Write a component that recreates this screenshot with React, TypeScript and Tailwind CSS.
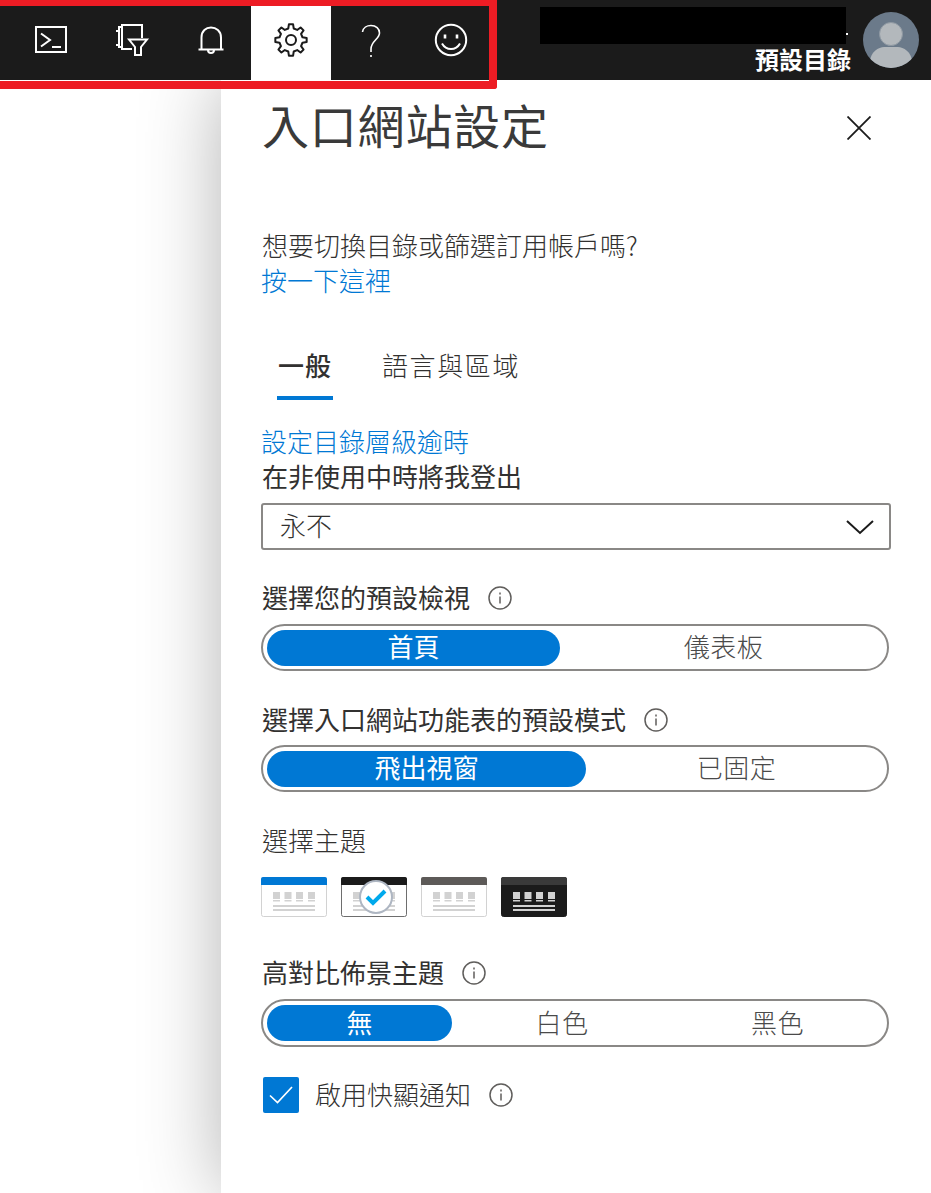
const cjk = { fontFamily: '"Noto Sans CJK TC", "Liberation Sans", sans-serif' }

function gearPath(cx: number, cy: number) {
  // 8 tooth cog
  const teeth = 8
  const pts: string[] = []
  for (let i = 0; i < teeth; i++) {
    const a = (i / teeth) * Math.PI * 2 - Math.PI / 2
    const step = (Math.PI * 2) / teeth
    const list: [number, number][] = [
      [11.8, a - step * 0.3],
      [15.8, a - step * 0.17],
      [15.8, a + step * 0.17],
      [11.8, a + step * 0.3],
    ]
    list.forEach(([r, t]) => {
      pts.push(`${(cx + r * Math.cos(t)).toFixed(2)} ${(cy + r * Math.sin(t)).toFixed(2)}`)
    })
  }
  return 'M' + pts.join('L') + 'Z'
}

function NavButton({ active, width = 2, children }: { active?: boolean; width?: number; children: React.ReactNode }) {
  return (
    <div className={`w-[80px] h-[80px] flex items-center justify-center ${active ? 'bg-white' : ''}`}>
      <svg width="40" height="40" viewBox="0 0 40 40" fill="none" stroke={active ? '#1b1b1b' : '#fff'} strokeWidth={width}>
        {children}
      </svg>
    </div>
  )
}

function Info() {
  return (
    <svg width="24" height="24" viewBox="0 0 24 24" fill="none" stroke="#605e5c" strokeWidth="1.5">
      <circle cx="12" cy="12" r="11" />
      <path d="M12 10.500v7M12 6.500v2" />
    </svg>
  )
}

function Toggle({ items, tall }: { items: { label: string; w: string; on?: boolean }[]; tall?: boolean }) {
  return (
    <div className={`ml-[-1px] w-[628px] ${tall ? 'h-[48px]' : 'h-[47px]'} border-2 border-[#8a8886] rounded-full flex items-center pl-[4px] pr-[4px]`}>
      {items.map((it) => (
        <div
          key={it.label}
          className={`${it.w} h-[36px] pb-[4px] rounded-full flex items-center justify-center text-[26px] ${it.on ? 'bg-[#0078d4] text-white' : 'text-[#4a4a4a] font-light tracking-[0.5px]'}`}
        >
          {it.label}
        </div>
      ))}
    </div>
  )
}

function Thumb({ head, dark, border, children }: { head: string; dark?: boolean; border: string; children?: React.ReactNode }) {
  return (
    <div className="relative w-[66px] h-[40px]">
      <svg width="66" height="40" viewBox="0 0 66 40">
        <rect x="0.5" y="0.5" width="65" height="39" rx="2" fill={dark ? '#1b1b1b' : '#fff'} stroke={border} />
        <path d="M0 8V2a2 2 0 0 1 2-2h62a2 2 0 0 1 2 2v6z" fill={head} />
        {[12, 23.5, 35, 47].map((x) => (
          <g key={x} fill="#d2d2d2">
            <rect x={x} y="15" width="7" height="7" />
            <rect x={x} y="23" width="7" height="1.5" />
          </g>
        ))}
        <rect x="12" y="28" width="42" height="2" fill="#d2d2d2" />
        <rect x="12" y="32" width="42" height="2" fill="#d2d2d2" />
      </svg>
      {children}
    </div>
  )
}

export default function App() {
  return (
    <div className="relative w-[931px] h-[1193px] overflow-hidden bg-white text-[#323130]" style={cjk}>
      {/* top bar */}
      <div className="relative z-10 h-[80px] bg-[#1b1b1b] flex pl-[11px]">
        <NavButton>
          <rect x="5" y="7" width="30" height="25" />
          <path d="M10 13.500l9 6.500-9 6.500M21 27h9" />
        </NavButton>
        <NavButton>
          <path d="M31 18V5H11v24h10M11 7H8v20h3M5 11h4M5 25h4" />
          <path d="M18 19.500h18l-6 7.500v8h-6v-8z" />
        </NavButton>
        <NavButton>
          <path d="M10.500 29.500V17.500C10.500 11 15 7.500 20 7.500S30 11 30 17.500v12M7.500 29.500h25M17 30a3 3 0 0 0 6 0" />
        </NavButton>
        <NavButton active>
          <path d={gearPath(20, 20)} strokeLinejoin="round" />
          <circle cx="20" cy="20" r="5" />
        </NavButton>
        <NavButton width={1.6}>
          <path d="M11.500 12C12 7.500 16 5.500 20 5.500c5 0 8.500 3 8.500 7.500 0 6-8.500 8-8.500 16v3M20 35v2" />
        </NavButton>
        <NavButton>
          <circle cx="20" cy="20" r="15.200" />
          <path d="M11 23.500c2 3.500 5.500 5.500 9 5.500s7-2 9-5.500" />
          <path d="M14 14.500v4M26 14.500v4" strokeWidth="2.600" />
        </NavButton>
        <div className="flex-1 flex justify-end pr-[12px]">
          <div className="relative flex flex-col items-end mr-[12px]">
            <div className="mt-[7px] mr-[5px] w-[306px] h-[37px] bg-black" />
            <div className="absolute right-[3px] top-[33px] w-[2px] h-[2px] bg-white" />
            <div className="text-white font-bold text-[24px] leading-[30px]">預設目錄</div>
          </div>
          <div className="mt-[12px] w-[56px] h-[56px] rounded-full bg-[#6b7a8a] overflow-hidden">
            <svg width="56" height="56" viewBox="0 0 56 56">
              <path d="M7 50c0-10 9-15 14-15h14c5 0 14 5 14 15v6H7z" fill="#b3b8bc" />
              <circle cx="28" cy="22" r="11.500" fill="#b3b8bc" stroke="#8e98a2" strokeWidth="1" />
            </svg>
          </div>
        </div>
      </div>

      {/* red highlight */}
      <div className="absolute z-20 left-0 top-0 w-[497px] h-[89px] border-t-[6px] border-r-[8px] border-b-[8px] border-[#ed1c24] rounded-br-[3px] pointer-events-none" />

      {/* settings panel */}
      <div className="ml-[221px] h-[1113px] bg-white pl-[41px] pr-[40px] shadow-[0_0_75px_rgba(0,0,0,0.3)]">
        <div className="flex items-start justify-between h-[148px]">
          <h1 className="text-[47px] leading-[64px] mt-[12px] font-normal tracking-[0.8px] text-[#3a3a3a] whitespace-nowrap">入口網站設定</h1>
          <svg className="mt-[36px] mr-[20px]" width="24" height="24" viewBox="0 0 24 24" stroke="#1b1b1b" strokeWidth="1.8">
            <path d="M0.500 0.500l23 23M23.500 0.500l-23 23" />
          </svg>
        </div>

        <p className="text-[26px] leading-[34px] font-light">想要切換目錄或篩選訂用帳戶嗎?</p>
        <a className="block mt-[1px] ml-[-1px] text-[26px] leading-[34px] text-[#0078d4] font-light">按一下這裡</a>

        <div className="flex mt-[49px] h-[54px] pt-[1px] text-[26px] leading-[36px]">
          <div className="ml-[15px] w-[56px] h-[53px] border-b-4 border-[#0078d4] font-medium text-center tracking-[1px] whitespace-nowrap">一般</div>
          <div className="ml-[49px] font-light tracking-[1.600px] whitespace-nowrap">語言與區域</div>
        </div>

        <a className="block mt-[24px] ml-[-1px] text-[26px] leading-[34px] text-[#0078d4] font-light">設定目錄層級逾時</a>
        <div className="mt-[-1px] text-[26px] leading-[38px] font-normal">在非使用中時將我登出</div>

        <div className="ml-[-1px] mt-[8px] w-[630px] h-[47px] pb-[4px] border-2 border-[#8a8886] rounded-[3px] flex items-center justify-between pl-[17px] pr-[15px] text-[26px] font-light">
          永不
          <svg className="mt-[4px]" width="28" height="16" viewBox="0 0 28 16" fill="none" stroke="#1b1b1b" strokeWidth="2">
            <path d="M1 2l13 12L27 2" />
          </svg>
        </div>

        <div className="mt-[30px] flex items-center gap-[18px] h-[36px]">
          <span className="text-[26px] pb-[4px]">選擇您的預設檢視</span>
          <Info />
        </div>
        <div className="mt-[8px]">
          <Toggle items={[{ label: '首頁', w: 'w-[293px]', on: true }, { label: '儀表板', w: 'flex-1 pl-[4px]' }]} />
        </div>

        <div className="mt-[31px] flex items-center gap-[18px] h-[36px]">
          <span className="text-[26px] pb-[4px]">選擇入口網站功能表的預設模式</span>
          <Info />
        </div>
        <div className="mt-[7px]">
          <Toggle items={[{ label: '飛出視窗', w: 'w-[319px]', on: true }, { label: '已固定', w: 'flex-1 pl-[4px]' }]} />
        </div>

        <div className="mt-[31px] h-[34px] text-[26px] leading-[34px] font-light">選擇主題</div>

        <div className="mt-[20px] ml-[-1px] flex gap-[14px]">
          <Thumb head="#0078d4" border="#d2d2d2" />
          <Thumb head="#1b1b1b" border="#6e6e6e">
            <div className="absolute left-[18px] top-[3px] w-[34px] h-[34px] rounded-full bg-white border-2 border-[#aeb6c2] flex items-center justify-center">
              <svg width="22" height="18" viewBox="0 0 22 18" fill="none" stroke="#00a9ec" strokeWidth="4">
                <path d="M2 9l6 6L20 3" />
              </svg>
            </div>
          </Thumb>
          <Thumb head="#5d5a58" border="#d2d2d2" />
          <Thumb head="#3a3a3a" border="#1b1b1b" dark />
        </div>

        <div className="mt-[38px] flex items-center gap-[18px] h-[36px]">
          <span className="text-[26px] pb-[4px]">高對比佈景主題</span>
          <Info />
        </div>
        <div className="mt-[8px]">
          <Toggle tall items={[{ label: '無', w: 'w-[185px]', on: true }, { label: '白色', w: 'w-[220px]' }, { label: '黑色', w: 'w-[211px]' }]} />
        </div>

        <div className="mt-[30px] flex items-center h-[36px]">
          <div className="ml-[1px] w-[36px] h-[36px] rounded-[2px] bg-[#0078d4] flex items-center justify-center">
            <svg width="24" height="18" viewBox="0 0 24 18" fill="none" stroke="#fff" strokeWidth="1.700">
              <path d="M1 9.500l7.500 7L23 1" />
            </svg>
          </div>
          <span className="ml-[16px] text-[26px] font-light pb-[4px]">啟用快顯通知</span>
          <span className="ml-[18px]"><Info /></span>
        </div>
      </div>
    </div>
  )
}
